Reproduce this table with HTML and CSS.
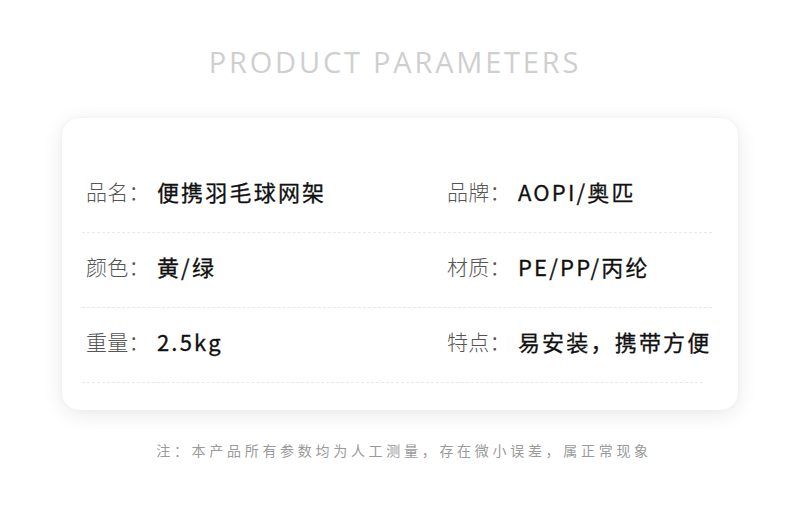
FILE: index.html
```html
<!DOCTYPE html>
<html lang="zh-CN">
<head>
<meta charset="utf-8">
<title>Product Parameters</title>
<link rel="stylesheet" href="styles.css">
</head>
<body>
<main class="page">
  <h1 class="title">PRODUCT PARAMETERS</h1>
  <section class="card">
    <div class="row">
      <div class="item"><span class="label">品名：</span><span class="value">便携羽毛球网架</span></div>
      <div class="item"><span class="label">品牌：</span><span class="value">AOPI/奥匹</span></div>
    </div>
    <div class="row">
      <div class="item"><span class="label">颜色：</span><span class="value">黄/绿</span></div>
      <div class="item"><span class="label">材质：</span><span class="value">PE/PP/丙纶</span></div>
    </div>
    <div class="row row-last">
      <div class="item"><span class="label">重量：</span><span class="value">2.5kg</span></div>
      <div class="item"><span class="label">特点：</span><span class="value">易安装，携带方便</span></div>
    </div>
  </section>
  <p class="note">注：本产品所有参数均为人工测量，存在微小误差，属正常现象</p>
</main>
</body>
</html>
```
FILE: styles.css
```css
* { box-sizing: border-box; }
html, body { margin: 0; padding: 0; background: #ffffff; }
body { width: 790px; height: 513px; overflow: hidden; font-family: "Noto Sans CJK SC", "Noto Sans", sans-serif; }
.page { display: flex; flex-direction: column; align-items: center; padding-top: 42px; }
.title {
  margin: 0;
  font-family: "Open Sans", "Noto Sans", sans-serif;
  font-weight: 400;
  font-size: 29px;
  line-height: 40px;
  letter-spacing: 2.8px;
  color: #cfcfcf;
}
.card {
  margin-top: 36px;
  width: 676px;
  height: 292px;
  margin-left: 10px;
  background: #fff;
  border-radius: 18px;
  box-shadow: 0 4px 22px rgba(0,0,0,0.09), 0 0 6px rgba(0,0,0,0.03);
  padding: 40px 26px 0 20px;
  display: flex;
  flex-direction: column;
}
.row {
  height: 75px;
  display: grid;
  grid-template-columns: 361px 1fr;
  padding-left: 4px;
  border-bottom: 1px dashed #e8e8e8;
  align-items: center;
  padding-bottom: 9px;
}
.row-last { margin-right: 9px; }
.item { display: flex; align-items: center; white-space: nowrap; }
.label {
  font-size: 21px;
  color: #555;
  font-weight: 300;
  letter-spacing: 0.3px;
}
.value {
  font-size: 22px;
  color: #111;
  font-weight: 400;
  letter-spacing: 2.2px;
  margin-left: 7px;
  -webkit-text-stroke: 0.3px #111;
}
.note {
  margin: 30px 0 0 0;
  font-size: 14px;
  line-height: 20px;
  letter-spacing: 3.7px;
  color: #9a9a9a;
  padding-left: 18px;
}
```
